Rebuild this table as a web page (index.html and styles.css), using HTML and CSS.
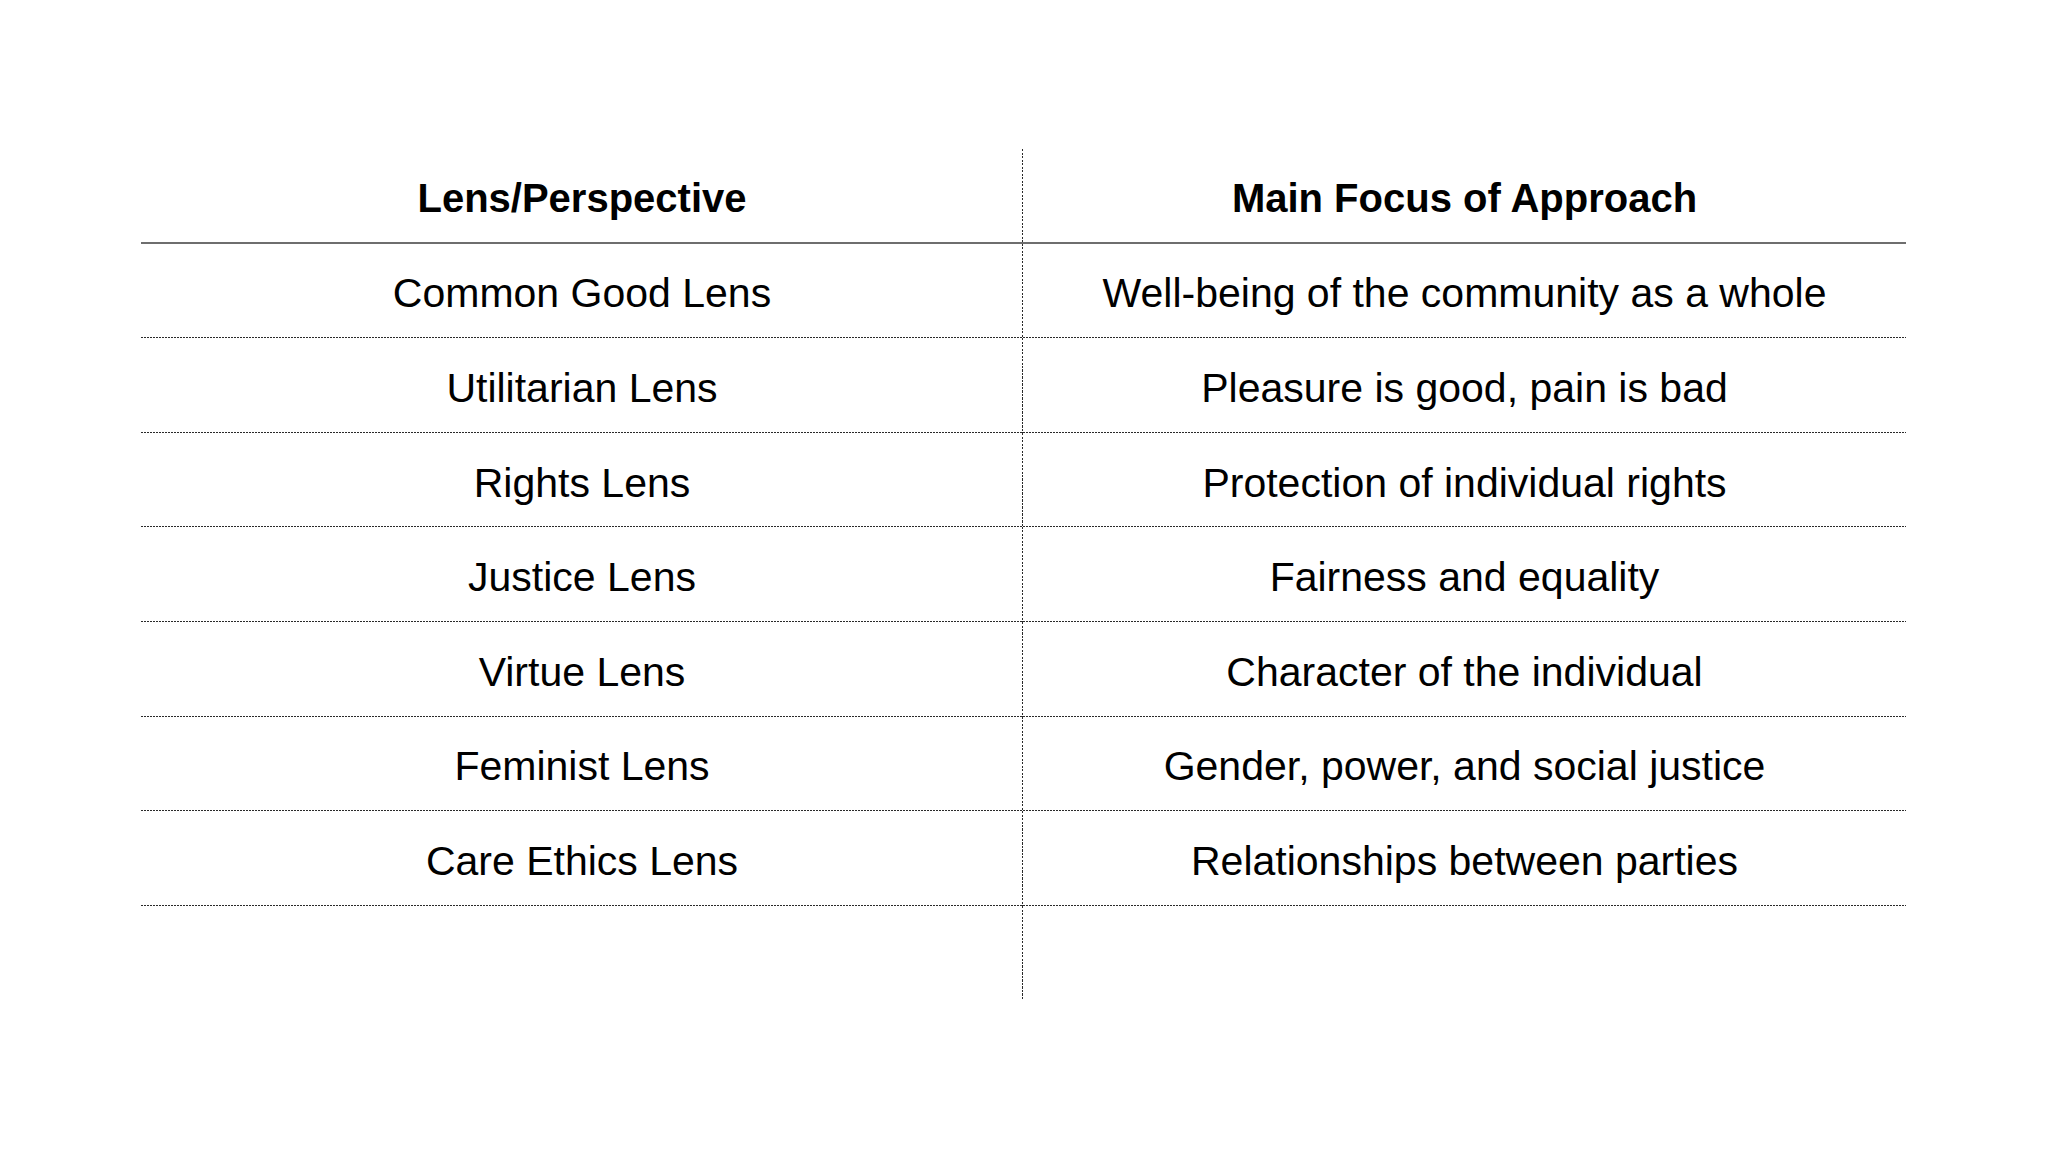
FILE: index.html
```html
<!DOCTYPE html>
<html>
<head>
<meta charset="utf-8">
<link rel="stylesheet" href="styles.css">
</head>
<body>
<div class="table">
  <div class="cell head left">Lens/Perspective</div>
  <div class="cell head">Main Focus of Approach</div>
  <div class="cell row left">Common Good Lens</div>
  <div class="cell row">Well-being of the community as a whole</div>
  <div class="cell row left">Utilitarian Lens</div>
  <div class="cell row">Pleasure is good, pain is bad</div>
  <div class="cell row left">Rights Lens</div>
  <div class="cell row">Protection of individual rights</div>
  <div class="cell row left">Justice Lens</div>
  <div class="cell row">Fairness and equality</div>
  <div class="cell row left">Virtue Lens</div>
  <div class="cell row">Character of the individual</div>
  <div class="cell row left">Feminist Lens</div>
  <div class="cell row">Gender, power, and social justice</div>
  <div class="cell row left">Care Ethics Lens</div>
  <div class="cell row">Relationships between parties</div>
  <div class="cell empty left"></div>
  <div class="cell empty"></div>
</div>
</body>
</html>
```
FILE: styles.css
```css
html, body {
  margin: 0;
  padding: 0;
  background: #ffffff;
}
body {
  width: 2048px;
  height: 1152px;
  overflow: hidden;
  font-family: "Liberation Sans", Arial, Helvetica, sans-serif;
  color: #000;
}
.table {
  margin: 149px 0 0 141px;
  width: 1765px;
  display: grid;
  grid-template-columns: 882px 883px;
  grid-auto-rows: 94.6px;
}
.cell {
  box-sizing: border-box;
  display: flex;
  align-items: center;
  justify-content: center;
  padding-top: 6px;
  font-size: 41px;
  white-space: nowrap;
  background-repeat: no-repeat;
}
.cell.row {
  background-image: repeating-linear-gradient(to right, #2a2a2a 0 2px, transparent 2px 3px);
  background-size: 100% 1px;
  background-position: left bottom;
}
.cell.row.left {
  background-image:
    repeating-linear-gradient(to right, #2a2a2a 0 2px, transparent 2px 3px),
    repeating-linear-gradient(to bottom, #2a2a2a 0 2px, transparent 2px 3.5px);
  background-size: 100% 1px, 1px 100%;
  background-position: left bottom, right top;
}
.cell.head {
  font-weight: bold;
  font-size: 40px;
  border-bottom: 2px solid #6e6e6e;
}
.cell.head.left,
.cell.empty.left {
  background-image: repeating-linear-gradient(to bottom, #2a2a2a 0 2px, transparent 2px 3.5px);
  background-size: 1px 100%;
  background-position: right top;
}
```
